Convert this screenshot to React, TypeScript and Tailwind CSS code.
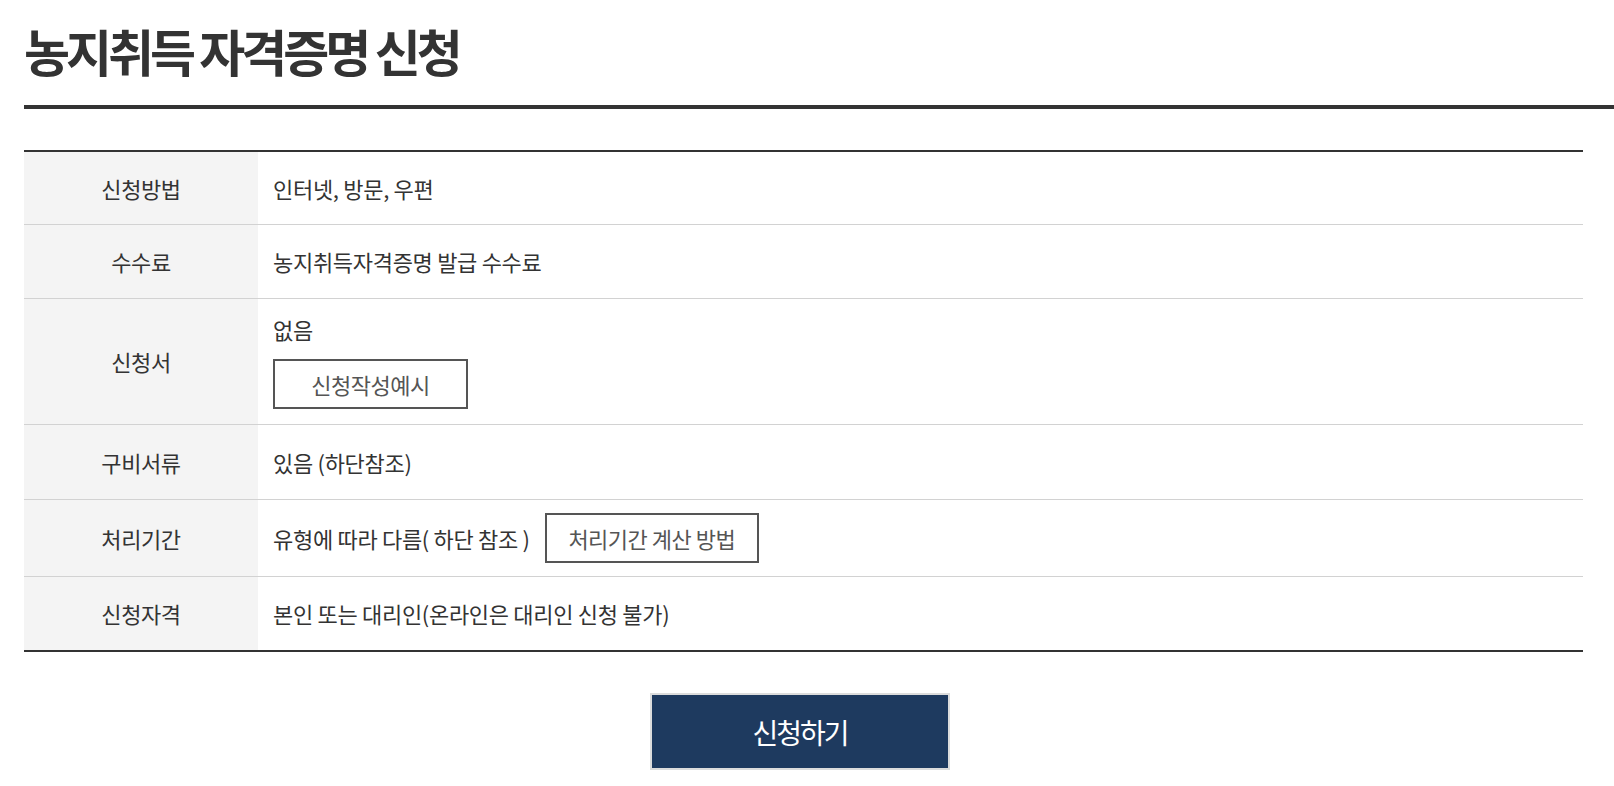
import React from "react";

const font = { fontFamily: '"Noto Sans CJK KR", "Noto Sans", sans-serif' };

function Row({ label, children, h, last }: { label: string; children: React.ReactNode; h: string; last?: boolean }) {
  return (
    <div className={`grid grid-cols-[234px_1fr] ${h} ${last ? "" : "border-b border-[#d2d2d2]"}`}>
      <div className="flex items-center justify-center bg-[#f4f4f4] text-[22px] tracking-[-0.4px] text-[#333]">{label}</div>
      <div className="flex items-center pl-[15px] text-[22px] tracking-[-0.3px] text-[#333]">{children}</div>
    </div>
  );
}

export default function App() {
  return (
    <div className="min-h-[786px] bg-white pl-6" style={font}>
      <div className="border-b-4 border-[#333] pt-[20px] pb-[25px]">
        <h1 className="text-[50px] font-bold leading-[60px] tracking-[-4px] text-[#333]">농지취득 자격증명 신청</h1>
      </div>
      <div className="mr-[31px] mt-[41px]">
        <div className="border-t-2 border-b-2 border-[#333]">
          <Row label="신청방법" h="h-[73px]">인터넷, 방문, 우편</Row>
          <Row label="수수료" h="h-[74px]">농지취득자격증명 발급 수수료</Row>
          <Row label="신청서" h="h-[126px]">
            <div className="flex flex-col items-start gap-[15px]">
              <span className="leading-[30px]">없음</span>
              <button className="flex h-[50px] w-[195px] items-center justify-center border-2 border-[#555] bg-white text-[22px] tracking-[-0.5px] text-[#555]">신청작성예시</button>
            </div>
          </Row>
          <Row label="구비서류" h="h-[75px]">있음 (하단참조)</Row>
          <Row label="처리기간" h="h-[77px]">
            <span>유형에 따라 다름( 하단 참조 )</span>
            <button className="ml-[15px] flex h-[50px] w-[214px] items-center justify-center border-2 border-[#555] bg-white text-[22px] tracking-[-0.5px] text-[#555]">처리기간 계산 방법</button>
          </Row>
          <Row label="신청자격" h="h-[73px]" last>본인 또는 대리인(온라인은 대리인 신청 불가)</Row>
        </div>
        <div className="mt-[41px] flex justify-center pr-[7px]">
          <button className="flex h-[77px] w-[300px] items-center justify-center border-2 border-[#dcdcdc] bg-[#1e3a5f] text-[28px] tracking-[-2px] text-white">신청하기</button>
        </div>
      </div>
    </div>
  );
}
